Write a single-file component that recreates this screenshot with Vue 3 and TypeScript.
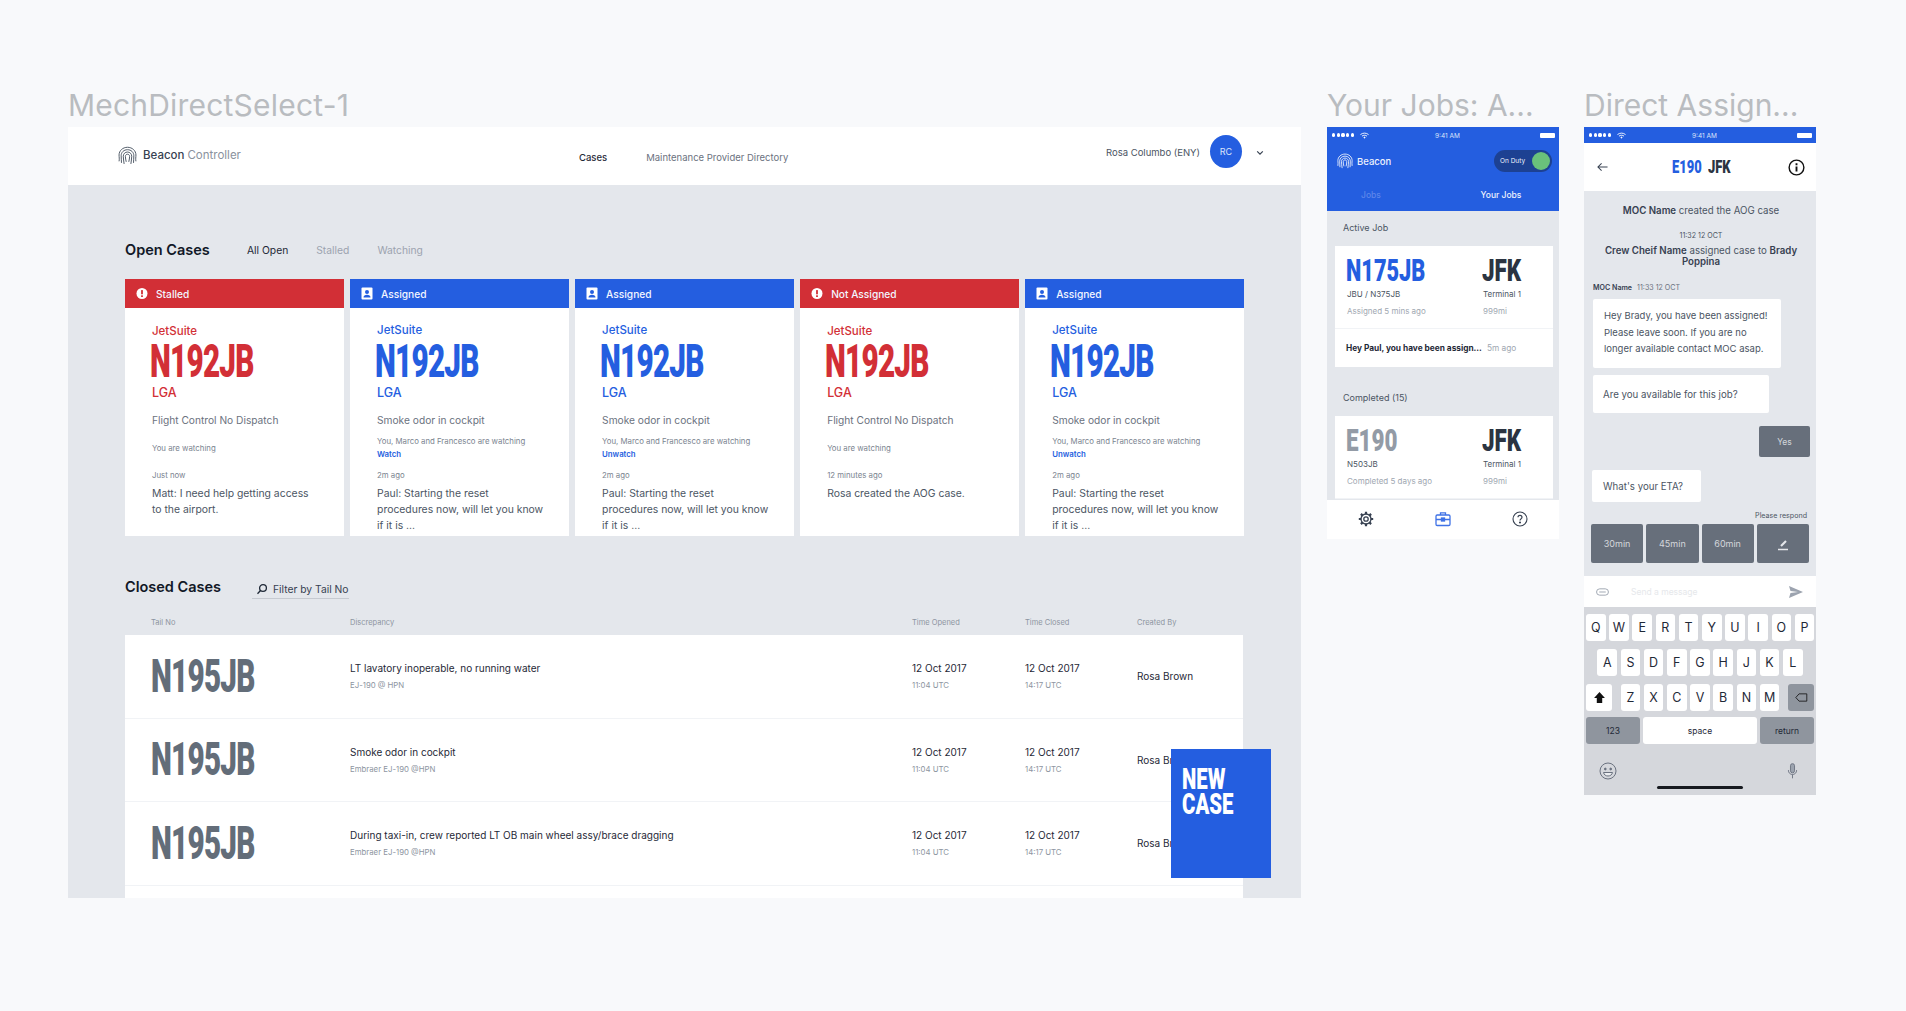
<script setup lang="ts">
interface OpenCase {
  status: string
  tone: 'red' | 'blue'
  issue: string
  watching: string
  action?: string
  when: string
  message: string
}

const openCases: OpenCase[] = [
  { status: 'Stalled', tone: 'red', issue: 'Flight Control No Dispatch', watching: 'You are watching', when: 'Just now', message: 'Matt: I need help getting access to the airport.' },
  { status: 'Assigned', tone: 'blue', issue: 'Smoke odor in cockpit', watching: 'You, Marco and Francesco are watching', action: 'Watch', when: '2m ago', message: 'Paul: Starting the reset procedures now, will let you know if it is ...' },
  { status: 'Assigned', tone: 'blue', issue: 'Smoke odor in cockpit', watching: 'You, Marco and Francesco are watching', action: 'Unwatch', when: '2m ago', message: 'Paul: Starting the reset procedures now, will let you know if it is ...' },
  { status: 'Not Assigned', tone: 'red', issue: 'Flight Control No Dispatch', watching: 'You are watching', when: '12 minutes ago', message: 'Rosa created the AOG case.' },
  { status: 'Assigned', tone: 'blue', issue: 'Smoke odor in cockpit', watching: 'You, Marco and Francesco are watching', action: 'Unwatch', when: '2m ago', message: 'Paul: Starting the reset procedures now, will let you know if it is ...' },
]

const closedCases = [
  { title: 'LT lavatory inoperable, no running water', sub: 'EJ-190 @ HPN' },
  { title: 'Smoke odor in cockpit', sub: 'Embraer EJ-190 @HPN' },
  { title: 'During taxi-in, crew reported LT OB main wheel assy/brace dragging', sub: 'Embraer EJ-190 @HPN' },
]

const etaOptions = ['30min', '45min', '60min']
const keysTop = 'QWERTYUIOP'.split('')
const keysMid = 'ASDFGHJKL'.split('')
const keysLow = 'ZXCVBNM'.split('')

// fingerprint arches, used by both logos
const fingerprint = [
  'M1 14.500C1.500 12.500 1 10.500 1 8.500 1 4.500 4.500 1.200 9 1.200s8 3.300 8 7.300c0 2-.5 4 0 6',
  'M3.300 16C3.300 13.500 3 11.500 3 9.200c0-3.200 2.500-5.700 6-5.700s6 2.500 6 5.700c0 2.300-.3 4.300-.3 6.800',
  'M5.800 17C5.500 14.500 5 12 5 9.700c0-2.300 1.800-4 4-4s4 1.700 4 4c0 2.300-.5 4.800-.8 7.300',
  'M7.800 15c-.4-1.800-.8-3.500-.8-5.200 0-1.100.9-2 2-2s2 .9 2 2c0 1.700-.4 3.400-.8 5.200',
]
</script>

<template>
  <div class="canvas">
    <!-- desktop frame -->
    <section class="frame frame-main">
      <h2 class="frame-title">MechDirectSelect-1</h2>
      <div class="desktop">
        <header class="topbar">
          <div class="brand">
            <svg class="brand-logo" viewBox="0 0 18 18" fill="none" stroke="#4b5563" stroke-width="0.9">
              <path v-for="d in fingerprint" :key="d" :d="d" />
            </svg>
            <span class="brand-name">Beacon</span>
            <span class="brand-role">Controller</span>
          </div>
          <nav class="topnav">
            <a class="active">Cases</a>
            <a>Maintenance Provider Directory</a>
          </nav>
          <div class="user">
            <span class="user-name">Rosa Columbo (ENY)</span>
            <span class="avatar">RC</span>
            <svg class="chevron" viewBox="0 0 10 6" fill="none" stroke="#374151" stroke-width="1.500">
              <path d="M1.500 1l3.500 3.500L8.500 1" />
            </svg>
          </div>
        </header>

        <main class="content">
          <div class="section-head">
            <h1>Open Cases</h1>
            <div class="filters">
              <span class="on">All Open</span>
              <span>Stalled</span>
              <span>Watching</span>
            </div>
          </div>

          <div class="cards">
            <article v-for="(c, i) in openCases" :key="i" class="card" :class="c.tone">
              <div class="card-head">
                <svg v-if="c.tone === 'red'" class="status-icon" viewBox="0 0 12 12">
                  <circle cx="6" cy="6" r="5.500" fill="#fff" />
                  <rect x="5.100" y="2.600" width="1.800" height="4.200" fill="#d22f36" />
                  <rect x="5.100" y="7.800" width="1.800" height="1.700" fill="#d22f36" />
                </svg>
                <svg v-else class="status-icon" viewBox="0 0 12 12">
                  <rect x="0.500" y="0" width="11" height="12" rx="1" fill="#fff" />
                  <circle cx="6" cy="4.400" r="2" fill="#245ee0" />
                  <path d="M2.500 10c0-2 1.500-2.800 3.500-2.800s3.500.8 3.500 2.800z" fill="#245ee0" />
                </svg>
                <span>{{ c.status }}</span>
              </div>
              <div class="card-body">
                <div class="operator">JetSuite</div>
                <div class="tail tail-lg">N192JB</div>
                <div class="airport">LGA</div>
                <div class="issue">{{ c.issue }}</div>
                <div class="watch">
                  <span>{{ c.watching }}</span>
                  <a v-if="c.action">{{ c.action }}</a>
                </div>
                <div class="when">{{ c.when }}</div>
                <p class="message">{{ c.message }}</p>
              </div>
            </article>
          </div>

          <div class="section-head closed-head">
            <h1>Closed Cases</h1>
            <label class="tail-filter">
              <svg viewBox="0 0 12 12" fill="none" stroke="#1f2937" stroke-width="1.300">
                <circle cx="7" cy="5" r="3.400" />
                <path d="M4.500 7.500L1.500 10.800" />
              </svg>
              <span>Filter by Tail No</span>
            </label>
          </div>

          <div class="table-row table-labels">
            <span class="first">Tail No</span>
            <span>Discrepancy</span>
            <span>Time Opened</span>
            <span>Time Closed</span>
            <span>Created By</span>
          </div>
          <div class="table">
            <div v-for="r in closedCases" :key="r.title" class="table-row closed-row">
              <div class="first"><div class="tail tail-lg">N195JB</div></div>
              <div>
                <div class="cell-main">{{ r.title }}</div>
                <div class="cell-sub">{{ r.sub }}</div>
              </div>
              <div>
                <div class="cell-main">12 Oct 2017</div>
                <div class="cell-sub">11:04 UTC</div>
              </div>
              <div>
                <div class="cell-main">12 Oct 2017</div>
                <div class="cell-sub">14:17 UTC</div>
              </div>
              <div class="cell-main">Rosa Brown</div>
            </div>
          </div>
        </main>

        <button class="new-case"><span>NEW</span><span>CASE</span></button>
      </div>
    </section>

    <!-- jobs phone -->
    <section class="frame frame-phone">
      <h2 class="frame-title">Your Jobs: A...</h2>
      <div class="phone jobs-phone">
        <div class="jobs-top">
          <div class="statusbar">
            <span class="dots"><i v-for="n in 5" :key="n"></i></span>
            <svg class="wifi" viewBox="0 0 10 7" fill="none" stroke="#fff" stroke-width="1">
              <path d="M.5 2.500C3 .3 7 .3 9.500 2.500M2.200 4.200c1.600-1.300 4-1.300 5.600 0" />
              <circle cx="5" cy="5.800" r=".6" fill="#fff" />
            </svg>
            <span class="clock">9:41 AM</span>
            <span class="battery"></span>
          </div>
          <div class="jobs-brand">
            <svg class="jobs-logo" viewBox="0 0 18 18" fill="none" stroke="#fff" stroke-width="0.9">
              <path v-for="d in fingerprint" :key="d" :d="d" />
            </svg>
            <span>Beacon</span>
            <div class="duty">
              <span>On Duty</span>
              <i></i>
            </div>
          </div>
          <div class="jobs-tabs">
            <span class="tab-off">Jobs</span>
            <span class="tab-on">Your Jobs</span>
          </div>
        </div>

        <div class="jobs-body">
          <div class="jobs-label">Active Job</div>
          <div class="job-card">
            <div class="job-top">
              <div>
                <div class="tail tail-md tail-blue">N175JB</div>
                <div class="job-line">JBU / N375JB</div>
                <div class="job-line muted">Assigned 5 mins ago</div>
              </div>
              <div>
                <div class="tail tail-md tail-dark tail-short">JFK</div>
                <div class="job-line">Terminal 1</div>
                <div class="job-line muted">999mi</div>
              </div>
            </div>
            <div class="job-msg">
              <b>Hey Paul, you have been assign...</b>
              <span>5m ago</span>
            </div>
          </div>
          <div class="jobs-label completed">Completed (15)</div>
          <div class="job-card">
            <div class="job-top">
              <div>
                <div class="tail tail-md tail-gray tail-short">E190</div>
                <div class="job-line">N503JB</div>
                <div class="job-line muted">Completed 5 days ago</div>
              </div>
              <div>
                <div class="tail tail-md tail-dark tail-short">JFK</div>
                <div class="job-line">Terminal 1</div>
                <div class="job-line muted">999mi</div>
              </div>
            </div>
          </div>
        </div>

        <nav class="jobs-nav">
          <svg viewBox="0 0 16 16" fill="none" stroke="#374151" stroke-width="1.300">
            <circle cx="8" cy="8" r="5" />
            <circle cx="8" cy="8" r="2.200" />
            <path stroke-width="2.200" d="M8 .8v2.400M8 12.800v2.400M.8 8h2.400M12.800 8h2.400M2.900 2.900l1.700 1.700M11.400 11.400l1.700 1.700M13.100 2.900l-1.700 1.700M4.600 11.400l-1.700 1.700" />
          </svg>
          <svg viewBox="0 0 16 16" fill="none" stroke="#3f72e6" stroke-width="1.300">
            <rect x="1" y="4" width="14" height="10.500" rx="1.200" />
            <path d="M5.500 4V1.800h5V4M1 8.500h5M10 8.500h5" />
            <rect x="6.500" y="7" width="3" height="3" fill="#3f72e6" />
          </svg>
          <svg viewBox="0 0 16 16" fill="none" stroke="#374151" stroke-width="1.100">
            <circle cx="8" cy="8" r="7" />
            <path stroke-width="1.200" d="M6 6.300C6 5 7 4.300 8 4.300s2 .8 2 1.900c0 1.600-2 1.700-2 3.300" />
            <circle cx="8" cy="11.500" r=".5" fill="#374151" />
          </svg>
        </nav>
      </div>
    </section>

    <!-- chat phone -->
    <section class="frame frame-phone">
      <h2 class="frame-title">Direct Assign...</h2>
      <div class="phone chat-phone">
        <div class="statusbar chat-status">
          <span class="dots"><i v-for="n in 5" :key="n"></i></span>
          <svg class="wifi" viewBox="0 0 10 7" fill="none" stroke="#fff" stroke-width="1">
            <path d="M.5 2.500C3 .3 7 .3 9.500 2.500M2.200 4.200c1.600-1.300 4-1.300 5.600 0" />
            <circle cx="5" cy="5.800" r=".6" fill="#fff" />
          </svg>
          <span class="clock">9:41 AM</span>
          <span class="battery"></span>
        </div>
        <header class="chat-head">
          <svg class="back" viewBox="0 0 12 10" fill="none" stroke="#374151" stroke-width="1.100">
            <path d="M11.500 5H1M5 1L1 5l4 4" />
          </svg>
          <div class="chat-title">
            <span class="tail tail-sm tail-blue">E190</span>
            <span class="tail tail-sm tail-dark">JFK</span>
          </div>
          <svg class="info" viewBox="0 0 18 18" fill="none" stroke="#111" stroke-width="1.500">
            <circle cx="9" cy="9" r="7.800" />
            <path stroke-width="2" d="M9 8v5.200M9 4.500v2" />
          </svg>
        </header>

        <div class="chat">
          <p class="note"><b>MOC Name</b> created the AOG case</p>
          <p class="stamp">11:32 12 OCT</p>
          <p class="note crew"><b>Crew Cheif Name</b> assigned case to <b>Brady Poppina</b></p>
          <p class="sender"><b>MOC Name</b> <span>11:33 12 OCT</span></p>
          <div class="bubble bubble-long">Hey Brady, you have been assigned! Please leave soon. If you are no longer available contact MOC asap.</div>
          <div class="bubble bubble-ask">Are you available for this job?</div>
          <div class="reply">Yes</div>
          <div class="bubble bubble-eta">What's your ETA?</div>
          <p class="respond">Please respond</p>
          <div class="eta-grid">
            <button v-for="o in etaOptions" :key="o">{{ o }}</button>
            <button>
              <svg viewBox="0 0 14 14" fill="none" stroke="#e5e7eb" stroke-width="1.500">
                <path d="M5 9l5-5" stroke-width="2.200" />
                <path d="M2 12.500h10" />
              </svg>
            </button>
          </div>
        </div>

        <div class="composer">
          <svg class="clip" viewBox="0 0 14 8" fill="none" stroke="#9ca3af" stroke-width="1">
            <rect x=".6" y=".6" width="12.800" height="6.800" rx="3.400" />
            <path d="M3.500 4h7" />
          </svg>
          <span class="placeholder">Send a message</span>
          <svg class="send" viewBox="0 0 14 12" fill="#9ca3af">
            <path d="M0 0l14 6-14 6 1.500-5L9 6 1.500 5z" />
          </svg>
        </div>

        <div class="keyboard">
          <div class="key-row">
            <span v-for="k in keysTop" :key="k" class="key">{{ k }}</span>
          </div>
          <div class="key-row center">
            <span v-for="k in keysMid" :key="k" class="key">{{ k }}</span>
          </div>
          <div class="key-row between">
            <span class="key wide">
              <svg viewBox="0 0 12 12" fill="#111"><path d="M6 1l5 5.500H8.500V11h-5V6.500H1z" /></svg>
            </span>
            <div class="key-group">
              <span v-for="k in keysLow" :key="k" class="key">{{ k }}</span>
            </div>
            <span class="key wide dark">
              <svg viewBox="0 0 16 12" fill="none" stroke="#111" stroke-width="1">
                <path d="M5 1.500h9.500v9H5L1 6z" />
              </svg>
            </span>
          </div>
          <div class="key-row last">
            <span class="key action dark">123</span>
            <span class="key space">space</span>
            <span class="key action dark">return</span>
          </div>
          <div class="key-foot">
            <svg viewBox="0 0 18 18" fill="none" stroke="#6b7280" stroke-width="1">
              <circle cx="9" cy="9" r="8" />
              <circle cx="6.300" cy="7" r=".9" fill="#6b7280" />
              <circle cx="11.700" cy="7" r=".9" fill="#6b7280" />
              <path d="M4.500 10.500h9c-.5 2.300-2.300 3.500-4.500 3.500s-4-1.200-4.500-3.500z" fill="#eceef1" />
            </svg>
            <svg viewBox="0 0 12 18" fill="none" stroke="#6b7280" stroke-width="1">
              <rect x="3.800" y="1" width="4.400" height="10" rx="2.200" fill="#9ca3af" />
              <path d="M1.500 8c0 3 2 4.800 4.500 4.800S10.500 11 10.500 8M6 12.800V17" />
            </svg>
          </div>
          <div class="home-bar"></div>
        </div>
      </div>
    </section>
  </div>
</template>

<style>
html,
body {
  background: #f8f9fb;
}
</style>

<style scoped>
.canvas {
  display: flex;
  width: 1906px;
  height: 1011px;
  box-sizing: border-box;
  padding: 85px 0 0 68px;
  font-family: Inter, "Liberation Sans", sans-serif;
  color: #1f2937;
  overflow: hidden;
}

.frame-main {
  width: 1233px;
  margin-right: 26px;
}

.frame-phone {
  width: 232px;
  margin-right: 25px;
}

.frame-title {
  margin: 0;
  height: 42px;
  font-size: 30px;
  line-height: 40px;
  font-weight: 400;
  letter-spacing: 0.2px;
  color: #b9bcc0;
  white-space: nowrap;
}

.frame-phone .frame-title {
  letter-spacing: 0;
}

.desktop {
  position: relative;
  height: 771px;
  background: #e4e7ec;
  overflow: hidden;
}

/* top bar */
.topbar {
  position: relative;
  display: flex;
  align-items: center;
  height: 58px;
  background: #fff;
}

.brand {
  display: flex;
  align-items: center;
  width: 511px;
  box-sizing: border-box;
  padding: 0 0 2px 50px;
  font-size: 11.500px;
}

.brand-logo {
  width: 19px;
  height: 19px;
  margin-right: 6px;
}

.brand-name {
  font-weight: 500;
  color: #374151;
  margin-right: 3px;
}

.brand-role {
  color: #8a929d;
}

.topnav {
  display: flex;
  gap: 39px;
  font-size: 9.500px;
  color: #6b7280;
  padding-top: 2px;
}

.topnav .active {
  color: #1f2937;
  font-weight: 500;
}

.user {
  display: flex;
  align-items: center;
  margin-left: auto;
  padding: 0 37px 9px 0;
}

.user-name {
  font-size: 9.500px;
  color: #4b5563;
  margin: 2px 10px 0 0;
}

.avatar {
  display: flex;
  align-items: center;
  justify-content: center;
  width: 32px;
  height: 33px;
  border-radius: 50%;
  background: #245ee0;
  color: #dbe4fa;
  font-size: 9px;
  margin-right: 14px;
}

.chevron {
  width: 8px;
  height: 6px;
  margin-top: 2px;
}

/* main content */
.content {
  padding: 54px 0 0 57px;
  width: 1118px;
}

.section-head {
  display: flex;
  height: 20px;
  align-items: center;
}

.section-head h1 {
  margin: 0;
  font-size: 14.500px;
  font-weight: 600;
  color: #111827;
  width: 122px;
}

.filters {
  display: flex;
  gap: 28px;
  font-size: 10.300px;
  color: #9ca3af;
  padding-top: 2px;
}

.filters .on {
  color: #1f2937;
}

.cards {
  display: flex;
  gap: 6.250px;
  margin-top: 20px;
}

.card {
  width: 218.800px;
  flex: none;
  background: #fff;
}

.card-head {
  display: flex;
  align-items: center;
  gap: 8px;
  height: 29px;
  padding-left: 11px;
  color: #f3f6ff;
  font-size: 10.200px;
  font-weight: 500;
}

.card.red .card-head {
  background: #d22f36;
}

.card.blue .card-head {
  background: #245ee0;
}

.status-icon {
  width: 12px;
  height: 13px;
}

.card-body {
  height: 228px;
  box-sizing: border-box;
  padding: 16px 0 0 27px;
  overflow: hidden;
}

.card.red .card-body {
  padding-top: 17px;
}

.operator {
  font-size: 11.500px;
  line-height: 12px;
  font-weight: 500;
}

.card.red .operator,
.card.red .airport,
.card.red .tail {
  color: #d22f36;
}

.card.blue .operator,
.card.blue .airport,
.card.blue .tail {
  color: #245ee0;
}

.card.red .tail-lg {
  margin-top: 6px;
}

/* the tail numbers are set in a heavy condensed face, squeezed from Roboto */
.tail {
  font-family: Roboto, "Liberation Sans", sans-serif;
  font-weight: 900;
  transform-origin: left center;
  white-space: nowrap;
}

.tail-lg {
  font-size: 46px;
  line-height: 37px;
  height: 37px;
  margin: 7px 0 6px -2px;
  transform: scaleX(0.645);
  letter-spacing: -1.200px;
}

.airport {
  font-size: 12.500px;
  line-height: 14px;
  font-weight: 500;
}

.issue {
  margin-top: 13px;
  font-size: 10.200px;
  line-height: 14px;
  color: #6b7280;
}

.watch {
  display: flex;
  flex-direction: column;
  justify-content: center;
  align-items: flex-start;
  height: 42px;
  font-size: 7.800px;
  line-height: 13px;
  color: #7b8490;
}

.watch a {
  color: #245ee0;
  font-weight: 600;
}

.when {
  font-size: 7.800px;
  line-height: 12px;
  color: #7b8490;
}

.message {
  width: 168px;
  margin: 5px 0 0;
  font-size: 10.400px;
  line-height: 16px;
  color: #4b5563;
}

.closed-head {
  margin-top: 41px;
  height: 23px;
  align-items: flex-start;
}

.closed-head h1 {
  width: 127px;
  line-height: 20px;
}

.tail-filter {
  display: flex;
  align-items: center;
  gap: 5px;
  height: 22px;
  box-sizing: border-box;
  padding: 2px 0 0 4px;
  border-bottom: 1px solid #c6cad1;
  font-size: 10.300px;
  color: #374151;
}

.tail-filter svg {
  width: 12px;
  height: 12px;
}

.table-row {
  display: grid;
  grid-template-columns: 225px 562px 113px 112px 1fr;
  align-items: center;
}

.table-row .first {
  padding-left: 26px;
}

.table-labels {
  margin-top: 16px;
  height: 12px;
  margin-bottom: 7px;
  font-size: 7.500px;
  color: #8d95a1;
}

.table {
  background: #fff;
  height: 263px;
}

.closed-row {
  height: 83.500px;
  box-sizing: border-box;
  border-bottom: 1px solid #f1f3f6;
}

.closed-row .tail {
  color: #636d79;
}

.closed-row .tail-lg {
  margin: 0;
}

.cell-main {
  font-size: 10px;
  line-height: 14px;
  color: #1f2937;
}

.cell-sub {
  font-size: 7.800px;
  line-height: 12px;
  margin-top: 4px;
  color: #8d95a1;
}

.new-case {
  position: absolute;
  left: 1103px;
  top: 622px;
  display: flex;
  flex-direction: column;
  align-items: flex-start;
  width: 100px;
  height: 129px;
  box-sizing: border-box;
  padding: 18px 0 0 11px;
  border: 0;
  background: #245ee0;
  color: #fff;
  font-family: Roboto, "Liberation Sans", sans-serif;
  font-weight: 900;
  font-size: 30px;
  line-height: 24.500px;
}

.new-case span {
  transform: scaleX(0.68);
  transform-origin: left center;
}

/* phones */
.phone {
  display: flex;
  flex-direction: column;
  background: #e4e7ec;
  overflow: hidden;
}

.jobs-top {
  background: #245ee0;
  height: 84px;
}

.statusbar {
  display: flex;
  align-items: center;
  height: 16px;
  padding: 0 4px 0 5px;
  color: #dbe4fa;
  background: #245ee0;
}

.dots {
  display: flex;
  gap: 1.500px;
  margin-right: 6px;
}

.dots i {
  width: 3.200px;
  height: 3.200px;
  border-radius: 50%;
  background: #fff;
}

.wifi {
  width: 9px;
  height: 7px;
}

.clock {
  flex: 1;
  text-align: center;
  font-size: 6.500px;
  padding: 1px 14px 0 0;
}

.battery {
  width: 15px;
  height: 5px;
  border-radius: 1px;
  background: #fff;
}

.jobs-brand {
  display: flex;
  align-items: center;
  height: 22px;
  margin-top: 7px;
  padding: 0 7px 0 10px;
  color: #eef2fd;
  font-size: 9.500px;
  font-weight: 500;
}

.jobs-logo {
  width: 16px;
  height: 16px;
  margin-right: 4px;
}

.duty {
  display: flex;
  align-items: center;
  justify-content: space-between;
  margin-left: auto;
  width: 58px;
  height: 22px;
  box-sizing: border-box;
  padding: 0 2px 0 6px;
  border-radius: 11px;
  background: #1d4192;
  font-size: 6.500px;
  font-weight: 400;
}

.duty i {
  width: 18px;
  height: 18px;
  border-radius: 50%;
  background: #6ac17b;
}

.jobs-tabs {
  display: flex;
  margin-top: 17px;
  font-size: 8.500px;
  line-height: 12px;
  font-weight: 500;
  text-align: center;
}

.tab-off {
  width: 88px;
  margin-right: 28px;
  color: #5d86ea;
}

.tab-on {
  width: 116px;
  color: #eef2fd;
}

.jobs-body {
  height: 289px;
  box-sizing: border-box;
  padding: 11px 6px 0 8px;
  overflow: hidden;
}

.jobs-label {
  padding-left: 8px;
  margin-bottom: 12px;
  font-size: 9px;
  line-height: 12px;
  color: #4b5563;
}

.jobs-label.completed {
  margin-top: 25px;
  margin-bottom: 12px;
}

.job-card {
  background: #fff;
}

.job-top {
  display: grid;
  grid-template-columns: 136px 1fr;
  height: 83px;
  box-sizing: border-box;
  padding: 10.500px 0 0 12px;
  border-bottom: 1px solid #f1f3f6;
}

.tail-md {
  font-size: 32px;
  line-height: 26px;
  height: 26px;
  transform: scaleX(0.68);
  margin-bottom: 5.500px;
  margin-left: -1px;
}

.tail-short {
  transform: scaleX(0.7);
}

.tail.tail-blue {
  color: #245ee0;
}

.tail.tail-dark {
  color: #2b3441;
}

.tail.tail-gray {
  color: #939ba6;
}

.job-line {
  font-size: 8px;
  line-height: 12px;
  margin-bottom: 5px;
  color: #4b5563;
}

.job-line.muted {
  color: #a0a7b1;
}

.job-msg {
  display: flex;
  align-items: center;
  height: 38px;
  padding-left: 11px;
  font-size: 8.300px;
  white-space: nowrap;
}

.job-msg b {
  font-weight: 700;
  color: #1f2937;
  margin-right: 5px;
}

.job-msg span {
  color: #a0a7b1;
}

.jobs-nav {
  display: grid;
  grid-template-columns: repeat(3, 1fr);
  justify-items: center;
  align-items: center;
  height: 39px;
  background: #fff;
  padding-bottom: 1px;
  box-sizing: border-box;
}

.jobs-nav svg {
  width: 16px;
  height: 16px;
}

.chat-phone {
  height: 668px;
}

.chat-head {
  display: flex;
  align-items: center;
  justify-content: space-between;
  height: 48px;
  padding: 0 11px 0 13px;
  background: #fff;
}

.back {
  width: 11px;
  height: 10px;
}

.chat-title {
  display: flex;
  width: 58px;
  margin-left: 5px;
  gap: 6px;
}

.tail-sm {
  display: block;
  font-size: 18px;
  line-height: 20px;
  width: 30px;
  transform: scaleX(0.72);
}

.info {
  width: 17px;
  height: 17px;
}

.chat {
  display: flex;
  flex-direction: column;
  height: 385px;
  box-sizing: border-box;
  padding: 14px 7px 0 9px;
}

.note {
  margin: 0;
  text-align: center;
  font-size: 9.700px;
  line-height: 12px;
  color: #4b5563;
}

.note b {
  font-weight: 600;
  color: #374151;
}

.stamp {
  margin: 13px 0 0;
  text-align: center;
  font-size: 7.100px;
  line-height: 12px;
  color: #4b5563;
}

.crew {
  margin: 2.500px -4px 0;
  line-height: 11.500px;
}

.sender {
  margin: 14.500px 0 0;
  font-size: 7.100px;
  line-height: 12px;
  color: #6b7280;
}

.sender b {
  color: #374151;
  font-weight: 600;
}

.sender span {
  margin-left: 3px;
}

.bubble {
  box-sizing: border-box;
  background: #fff;
  border-radius: 2px;
  font-size: 9.700px;
  color: #4b5563;
}

.bubble-long {
  width: 188px;
  height: 69px;
  margin-top: 5px;
  padding: 9px 8px 0 11px;
  font-size: 9.500px;
  line-height: 16.500px;
}

.bubble-ask {
  display: flex;
  align-items: center;
  width: 176px;
  height: 38px;
  margin-top: 7px;
  padding-left: 10px;
}

.reply {
  display: flex;
  align-items: center;
  justify-content: center;
  align-self: flex-end;
  width: 51px;
  height: 31px;
  margin: 13px -1px 0 0;
  border-radius: 2px;
  background: #676f7b;
  color: #d4d7dc;
  font-size: 8.500px;
}

.bubble-eta {
  display: flex;
  align-items: center;
  width: 109px;
  height: 32px;
  margin: 13px 0 0 -1px;
  padding-left: 11px;
}

.respond {
  margin: 8px 2px 0 0;
  text-align: right;
  font-size: 7.100px;
  line-height: 12px;
  color: #4b5563;
}

.eta-grid {
  display: grid;
  grid-template-columns: repeat(4, 1fr);
  gap: 3px;
  height: 39px;
  margin: 2px 0 0 -2px;
}

.eta-grid button {
  display: flex;
  align-items: center;
  justify-content: center;
  padding: 0;
  border: 0;
  border-radius: 2px;
  background: #676f7b;
  color: #d4d7dc;
  font-family: inherit;
  font-size: 9px;
}

.eta-grid svg {
  width: 14px;
  height: 14px;
}

.composer {
  display: flex;
  align-items: center;
  height: 31px;
  box-sizing: border-box;
  padding: 0 13px 0 12px;
  background: #fff;
}

.clip {
  width: 13px;
  height: 8px;
  margin-right: 22px;
}

.placeholder {
  flex: 1;
  font-size: 8.500px;
  color: #e6e8eb;
}

.send {
  width: 14px;
  height: 12px;
}

.keyboard {
  display: flex;
  flex-direction: column;
  flex: 1;
  box-sizing: border-box;
  padding: 7px 2px 0;
  background: #d5d7dc;
}

.key-row {
  display: flex;
  gap: 3.600px;
  height: 27px;
  margin-bottom: 8px;
}

.key-row.center {
  justify-content: center;
}

.key-row.between {
  justify-content: space-between;
  margin-bottom: 6px;
}

.key-group {
  display: flex;
  gap: 3.600px;
}

.key {
  display: flex;
  align-items: center;
  justify-content: center;
  flex: none;
  width: 19.600px;
  border-radius: 3px;
  background: #fff;
  color: #1f2937;
  font-size: 12.500px;
}

.key.wide {
  width: 26px;
}

.key.wide svg {
  width: 13px;
  height: 13px;
}

.key.dark {
  background: #8f959e;
}

.key.action {
  width: 54px;
  font-size: 8.500px;
}

.key.space {
  flex: 1;
  font-size: 8.500px;
}

.key-row.last {
  gap: 3px;
  margin-bottom: 0;
}

.key-foot {
  display: flex;
  align-items: center;
  justify-content: space-between;
  padding: 0 16px 0 13px;
  margin-top: 18px;
}

.key-foot svg:first-child {
  width: 18px;
  height: 18px;
}

.key-foot svg:last-child {
  width: 11px;
  height: 18px;
}

.home-bar {
  align-self: center;
  width: 86px;
  height: 3px;
  margin-top: 6px;
  border-radius: 2px;
  background: #16191f;
}
</style>
